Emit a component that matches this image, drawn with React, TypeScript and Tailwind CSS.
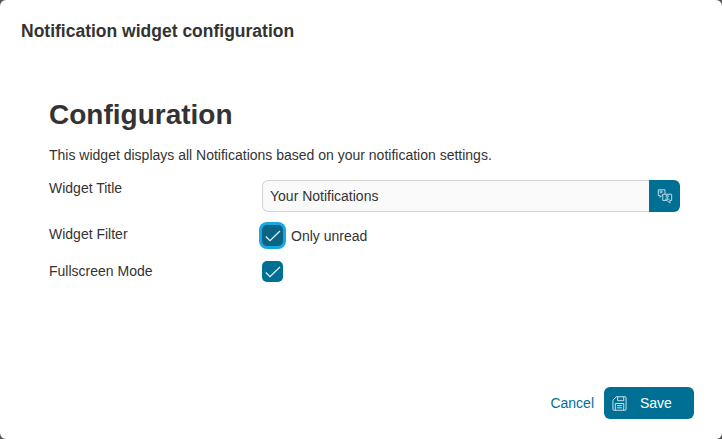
function TranslateIcon() {
  return (
    <svg viewBox="0 0 18 18" className="h-[16px] w-[16px]" fill="none" stroke="#cfe6ee" strokeWidth="1">
      <path d="M1.5 2h7.5v6.5H5.5L3.5 10.5V8.5H1.5z" />
      <circle cx="4.6" cy="4.4" r="1.2" />
      <path d="M6.5 7h10v7h-2v3l-3-3h-5z" fill="#006f94" />
      <circle cx="11.5" cy="9.2" r="1.3" />
      <path d="M9 12.6h5M11.5 10.5v2" />
    </svg>
  );
}

function SaveIcon() {
  return (
    <svg viewBox="0 0 16 16" className="h-[15px] w-[15px]" fill="none" stroke="#d5e8ef" strokeWidth="1">
      <path d="M4.5 .8h9.6a.9.9 0 0 1 .9.9v12.6a.9.9 0 0 1-.9.9H1.9a.9.9 0 0 1-.9-.9V4.5z" />
      <path d="M6 .8v4.2h6.5V.8M3.5 15.2V8h9v7.2M5.3 10.3h5.4M5.3 12.6h5.4" />
    </svg>
  );
}

function CheckMark() {
  return (
    <svg viewBox="0 0 21 21" className="h-[21px] w-[21px] shrink-0" fill="none" stroke="#e6f2f6" strokeWidth="1.25">
      <path d="M3.8 11.5l4.2 4.2 10-9.7" />
    </svg>
  );
}

function Checkbox({ focused }: { focused?: boolean }) {
  return (
    <span
      className={`flex h-[21px] w-[21px] items-center justify-center rounded-[5px] text-white ${
        focused ? "bg-[#0a6486] shadow-[0_0_0_3px_#19a6e0]" : "bg-[#006f94]"
      }`}
    >
      <CheckMark />
    </span>
  );
}

export default function App() {
  return (
    <div className="h-[439px] w-[722px] bg-[#555555] font-['Liberation_Sans',sans-serif] text-[#333333]">
      <div className="flex h-full flex-col rounded-[6px] bg-white">
        <div className="px-[21px] pt-[20px] text-[17.5px] leading-[22px] font-bold">
          Notification widget configuration
        </div>

        <div className="flex-1 pt-[56px] pr-[42px] pl-[49px]">
          <h1 className="text-[28px] leading-[34px] font-bold">Configuration</h1>
          <p className="mt-[14px] text-[14px] leading-[18px]">
            This widget displays all Notifications based on your notification settings.
          </p>

          <div className="mt-[16px] grid grid-cols-[213px_1fr] text-[14px] leading-[16px]">
            <div>Widget Title</div>
            <div className="flex h-[32px]">
              <div className="flex flex-1 items-center rounded-l-[6px] border border-r-0 border-[#d4d4d4] bg-[#fafafa] pl-[7px]">
                Your Notifications
              </div>
              <div className="flex w-[31px] items-center justify-center rounded-r-[6px] bg-[#006f94]">
                <TranslateIcon />
              </div>
            </div>

            <div className="pt-[14px]">Widget Filter</div>
            <div className="mt-[13px] flex items-center gap-[8px]">
              <Checkbox focused />
              <span>Only unread</span>
            </div>

            <div className="pt-[17px]">Fullscreen Mode</div>
            <div className="mt-[15px] flex items-center">
              <Checkbox />
            </div>
          </div>
        </div>

        <div className="flex items-center justify-end gap-[10px] pr-[28px] pb-[20px] text-[14px]">
          <span className="text-[#006f94]">Cancel</span>
          <button className="flex h-[32px] w-[90px] items-center rounded-[6px] bg-[#006f94] pl-[8px] text-white">
            <SaveIcon />
            <span className="ml-[13px]">Save</span>
          </button>
        </div>
      </div>
    </div>
  );
}
